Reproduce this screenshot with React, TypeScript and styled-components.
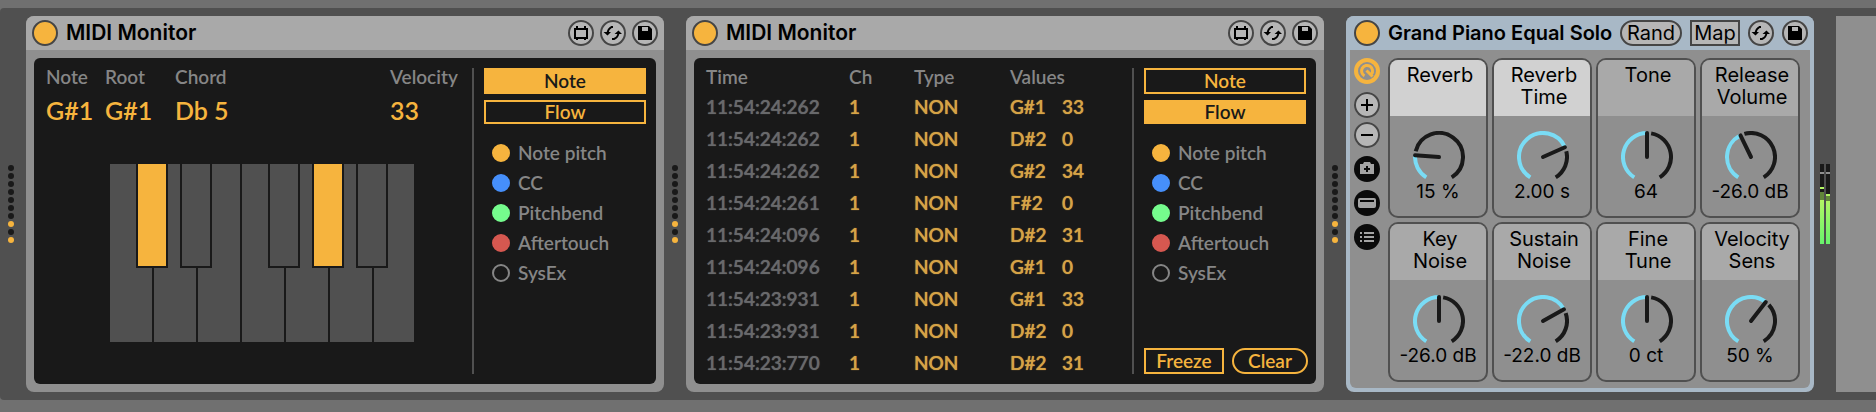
import React, { useState } from "react";
import styled, { createGlobalStyle } from "styled-components";

const c = {
  page: "#707070",
  rack: "#505050",
  header: "#a9a9a9",
  body: "#8f8f8f",
  screen: "#191919",
  amber: "#f6b43e",
  amberDim: "#d6a346",
  label: "#868686",
  time: "#68696b",
  line: "#505050",
  selected: "#a8b8c6",
  control: "#b6b6b6",
  lit: "#d1d1d1",
  blue: "#7adcf5",
};

const screenFont = `Lato, "Liberation Sans", sans-serif`;
const uiFont = `Inter, "Liberation Sans", sans-serif`;

const GlobalStyle = createGlobalStyle`
  *, *::before, *::after { box-sizing: border-box; }
  body { margin: 0; background: ${c.page}; font-family: ${uiFont}; overflow-x: auto; }
  button { margin: 0; padding: 0; font: inherit; color: inherit; cursor: pointer; }
`;

const Page = styled.main`
  padding: 8px 0 12px;
  min-width: 1400px;
`;

const Rack = styled.div`
  display: flex;
  padding: 8px 0;
  background: ${c.rack};
  border-radius: 4px 0 0 4px;
`;

const Rail = styled.div`
  flex: none;
  width: 22px;
  display: flex;
  align-items: center;
  justify-content: center;
  &:first-child { width: 26px; padding-right: 4px; }
`;

const Dots = styled.div`
  display: flex;
  flex-direction: column;
  gap: 2px;
`;

const Dot = styled.span<{ $on: boolean }>`
  width: 6px;
  height: 6px;
  border-radius: 50%;
  background: ${(p) => (p.$on ? c.amber : c.screen)};
`;

const DropZone = styled.div`
  flex: 40 1 0;
  background: ${c.body};
`;

const Device = styled.section<{ $grow: number; $selected?: boolean }>`
  flex: ${(p) => p.$grow} 1 0;
  min-width: ${(p) => (p.$selected ? "468px" : "0")};
  display: flex;
  flex-direction: column;
  border-radius: 8px;
  overflow: hidden;
  background: ${(p) => (p.$selected ? c.selected : c.body)};
`;

const Header = styled.header<{ $selected?: boolean }>`
  display: flex;
  align-items: center;
  gap: ${(p) => (p.$selected ? 8 : 6)}px;
  height: 34px;
  padding: 0 6px 0 ${(p) => (p.$selected ? 8 : 6)}px;
  background: ${(p) => (p.$selected ? c.selected : c.header)};
`;

const Title = styled.h2<{ $size: number; $inset: number }>`
  flex: 1;
  min-width: 0;
  margin: 0;
  padding-left: ${(p) => p.$inset}px;
  font-size: ${(p) => p.$size}px;
  font-weight: 600;
  line-height: 26px;
  color: #000;
  white-space: nowrap;
`;

const Power = styled.button`
  flex: none;
  width: 26px;
  height: 26px;
  border: 2px solid #454545;
  border-radius: 50%;
  background: ${c.amber};
`;

const RoundButton = styled.button<{ $tone?: "dark" | "bare" }>`
  flex: none;
  display: block;
  width: 26px;
  height: 26px;
  border: 0;
  border-radius: 50%;
  background: ${(p) => (p.$tone === "dark" ? "#0a0a0a" : p.$tone === "bare" ? "none" : c.control)};
  box-shadow: ${(p) => (p.$tone ? "none" : "inset 0 0 0 2px #454545")};
  svg { display: block; }
`;

const TextButton = styled.button<{ $pill?: boolean }>`
  flex: none;
  width: ${(p) => (p.$pill ? 62 : 50)}px;
  height: 26px;
  border: 2px solid #454545;
  border-radius: ${(p) => (p.$pill ? 13 : 0)}px;
  background: ${c.control};
  font-size: 20px;
  line-height: 22px;
  color: #000;
`;

const Screen = styled.div`
  flex: 1;
  display: flex;
  min-height: 326px;
  margin: 8px;
  border-radius: 6px;
  background: ${c.screen};
  font-family: ${screenFont};
  font-size: 19px;
  font-weight: 600;
`;

const View = styled.div`
  flex: 1;
  min-width: 0;
  padding: 5px 0 0 12px;
`;

const Side = styled.aside`
  flex: none;
  display: flex;
  flex-direction: column;
  width: 184px;
  margin: 10px 0;
  padding: 0 10px;
  border-left: 2px solid ${c.line};
`;

const ModeButton = styled.button<{ $active: boolean; $h: number }>`
  width: 162px;
  height: ${(p) => p.$h}px;
  margin-bottom: 6px;
  border: 2px solid ${c.amber};
  background: ${(p) => (p.$active ? c.amber : "transparent")};
  color: ${(p) => (p.$active ? c.screen : c.amber)};
  line-height: 20px;
`;

const Legend = styled.ul`
  list-style: none;
  margin: 8px 0 0;
  padding: 0 0 0 8px;
`;

const LegendItem = styled.label`
  display: flex;
  align-items: center;
  gap: 8px;
  height: 30px;
  color: ${c.label};
  line-height: 30px;
`;

const LegendCheck = styled.input<{ $color?: string }>`
  appearance: none;
  width: 18px;
  height: 18px;
  margin: 0;
  border: 2px solid ${(p) => p.$color ?? c.label};
  border-radius: 50%;
  &:checked { background: ${(p) => p.$color ?? c.label}; }
`;

const Actions = styled.div`
  display: flex;
  gap: 8px;
  margin-top: auto;
`;

const ActionButton = styled.button<{ $pill?: boolean }>`
  flex: none;
  width: ${(p) => (p.$pill ? 76 : 80)}px;
  height: 26px;
  border: 2px solid ${c.amber};
  border-radius: ${(p) => (p.$pill ? 13 : 0)}px;
  background: transparent;
  color: ${c.amber};
  line-height: 20px;
`;

const Readouts = styled.dl`
  display: grid;
  grid-template-columns: 59px 70px 1fr 82px;
  margin: 0;
`;

const Readout = styled.div`
  white-space: nowrap;
  dt { line-height: 28px; color: ${c.label}; }
  dd { margin: 0; font-size: 25px; line-height: 38px; color: ${c.amber}; }
`;

const KeyboardArea = styled.div`
  display: flex;
  justify-content: center;
  padding: 35px 0 0 6px;
`;

const LogTable = styled.table`
  width: 100%;
  table-layout: fixed;
  border-collapse: collapse;
  text-align: left;
  th, td { padding: 0; white-space: nowrap; }
  th { height: 27px; font-weight: 600; color: ${c.label}; }
  td { height: 32px; color: ${c.amberDim}; text-shadow: 0 0 1px ${c.amberDim}; }
  td:first-child { color: ${c.time}; text-shadow: 0 0 1px ${c.time}; }
`;

const InstrumentBody = styled.div`
  flex: 1;
  display: flex;
  gap: 8px;
  margin: 0 4px 4px;
  padding: 8px 10px 6px 4px;
  border-radius: 0 0 6px 6px;
  background: ${c.body};
`;

const Tools = styled.div`
  display: flex;
  flex-direction: column;
  gap: 8px;
`;

const AddRemove = styled.div`
  display: flex;
  flex-direction: column;
  gap: 4px;
`;

const MacroGrid = styled.div`
  flex: 1;
  display: grid;
  grid-template-columns: repeat(4, minmax(0, 1fr));
  grid-auto-rows: 1fr;
  gap: 4px;
`;

const Macro = styled.label`
  display: flex;
  flex-direction: column;
  align-items: center;
  height: 160px;
  border: 2px solid ${c.line};
  border-radius: 10px;
  overflow: hidden;
  color: #000;
`;

const MacroName = styled.span<{ $lit?: boolean }>`
  width: 100%;
  height: 56px;
  padding: 4px 0 0 4px;
  background: ${(p) => (p.$lit ? c.lit : c.header)};
  font-size: 20px;
  line-height: 22px;
  text-align: center;
  white-space: pre-line;
`;

const Dial = styled.span`
  position: relative;
  display: block;
  width: 52px;
  height: 50px;
  margin: 15px 0 0 2px;
  svg { display: block; }
  input {
    position: absolute;
    inset: 0;
    width: 100%;
    height: 100%;
    margin: 0;
    opacity: 0;
    cursor: pointer;
  }
`;

const MacroValue = styled.span`
  font-size: 19px;
  line-height: 22px;
  white-space: nowrap;
`;

const ResizeIcon = () => (
  <svg width="26" height="26" viewBox="0 0 26 26" fill="none" stroke="#000" strokeWidth="2">
    <path d="M7 9H19V18H7ZM9 6V8M17 6V8M9 19V20M17 19V20" />
  </svg>
);

const SwapIcon = () => (
  <svg width="26" height="26" viewBox="0 0 26 26">
    <g fill="none" stroke="#000" strokeWidth="2">
      <path d="M13 7H11.5Q8 9 7.5 13" />
      <path d="M12 19H14Q18 17.500 18.500 13" />
    </g>
    <path d="M3.500 12H11L7.500 15.500ZM14.500 14H22L18.500 10.500Z" fill="#000" />
  </svg>
);

const SaveIcon = () => (
  <svg width="26" height="26" viewBox="0 0 26 26">
    <path d="M6 6H17L20 9V20H6Z" fill="#000" />
    <path d="M10 7H16V11H10Z" fill={c.control} />
  </svg>
);

const MacroKnobIcon = () => (
  <svg width="26" height="26" viewBox="0 0 26 26" fill="none">
    <circle cx="13" cy="13" r="11" stroke={c.amber} strokeWidth="4" />
    <path d="M10.500 17.800A5.500 5.500 0 1 1 17.500 16.200" stroke={c.amber} strokeWidth="3" />
    <path d="M12.500 12.500L18.500 18.500" stroke={c.amber} strokeWidth="3" />
  </svg>
);

const PlusIcon = () => (
  <svg width="26" height="26" viewBox="0 0 26 26" stroke="#000" strokeWidth="2">
    <path d="M7 13H19M13 7V19" />
  </svg>
);

const MinusIcon = () => (
  <svg width="26" height="26" viewBox="0 0 26 26" stroke="#000" strokeWidth="2">
    <path d="M7 13H19" />
  </svg>
);

const CameraIcon = () => (
  <svg width="26" height="26" viewBox="0 0 26 26">
    <path d="M6 8H9L10 6H16L17 8H20V18H6Z" fill="#a3a3a3" />
    <path d="M10 13H16M13 10V16" stroke="#0a0a0a" strokeWidth="2" />
  </svg>
);

const PanelIcon = () => (
  <svg width="26" height="26" viewBox="0 0 26 26">
    <rect x="4" y="8" width="18" height="10" rx="2" fill="#a3a3a3" />
    <path d="M6 11H20" stroke="#0a0a0a" strokeWidth="2" />
  </svg>
);

const ListIcon = () => (
  <svg width="26" height="26" viewBox="0 0 26 26" stroke="#a3a3a3" strokeWidth="2">
    <path d="M6 9H8M10 9H20M6 13H8M10 13H20M6 17H8M10 17H20" />
  </svg>
);

const MidiDots = () => (
  <Rail>
    <Dots>
      {Array.from({ length: 10 }, (_, i) => (
        <Dot key={i} $on={i === 7 || i === 9} />
      ))}
    </Dots>
  </Rail>
);

const LevelMeter = () => (
  <Rail>
    <svg width="10" height="80" viewBox="0 0 10 80" shapeRendering="crispEdges" role="img" aria-label="Output level">
      <defs>
        <linearGradient id="level" x1="0" y1="36" x2="0" y2="80" gradientUnits="userSpaceOnUse">
          <stop offset="0" stopColor="#b2f564" />
          <stop offset="1" stopColor="#68f26c" />
        </linearGradient>
      </defs>
      <path d="M0 0H4V80H0ZM6 0H10V80H6Z" fill={c.screen} />
      <path d="M0 8H4V10H0ZM6 8H10V10H6Z" fill="#8f8f8f" />
      <path d="M0 28H4V36H0ZM6 32H10V37H6Z" fill="#61853a" />
      <path d="M0 23H4V25H0ZM6 30H10V32H6Z" fill="#b2f564" />
      <path d="M0 36H4V80H0ZM6 37H10V80H6Z" fill="url(#level)" />
    </svg>
  </Rail>
);

const sources: [string, string | undefined][] = [
  ["Note pitch", c.amber],
  ["CC", "#468ffa"],
  ["Pitchbend", "#75fc8d"],
  ["Aftertouch", "#d65850"],
  ["SysEx", undefined],
];

const SourceLegend = () => (
  <Legend>
    {sources.map(([name, color]) => (
      <li key={name}>
        <LegendItem>
          <LegendCheck type="checkbox" $color={color} defaultChecked={color !== undefined} />
          {name}
        </LegendItem>
      </li>
    ))}
  </Legend>
);

const readouts = [
  ["Note", "G#1"],
  ["Root", "G#1"],
  ["Chord", "Db 5"],
  ["Velocity", "33"],
];

const blackKeys = [
  { x: 26, on: true },
  { x: 70, on: false },
  { x: 158, on: false },
  { x: 202, on: true },
  { x: 246, on: false },
];

const NoteView = () => (
  <View>
    <Readouts>
      {readouts.map(([name, value]) => (
        <Readout key={name}>
          <dt>{name}</dt>
          <dd>{value}</dd>
        </Readout>
      ))}
    </Readouts>
    <KeyboardArea>
      <svg width="304" height="178" viewBox="0 0 304 178" shapeRendering="crispEdges" role="img" aria-label="Keyboard">
        {Array.from({ length: 7 }, (_, i) => (
          <rect key={i} x={i * 44} y="0" width={i === 6 ? 40 : 42} height="178" fill={c.rack} />
        ))}
        {blackKeys.map((k) => (
          <g key={k.x}>
            <rect x={k.x} y="0" width="32" height="104" fill={c.screen} />
            <rect x={k.x + 2} y="0" width="28" height="102" fill={k.on ? c.amber : c.rack} />
          </g>
        ))}
      </svg>
    </KeyboardArea>
  </View>
);

const events = [
  ["11:54:24:262", "1", "NON", "G#1", "33"],
  ["11:54:24:262", "1", "NON", "D#2", "0"],
  ["11:54:24:262", "1", "NON", "G#2", "34"],
  ["11:54:24:261", "1", "NON", "F#2", "0"],
  ["11:54:24:096", "1", "NON", "D#2", "31"],
  ["11:54:24:096", "1", "NON", "G#1", "0"],
  ["11:54:23:931", "1", "NON", "G#1", "33"],
  ["11:54:23:931", "1", "NON", "D#2", "0"],
  ["11:54:23:770", "1", "NON", "D#2", "31"],
];

const FlowView = () => (
  <View>
    <LogTable>
      <colgroup>
        <col width="143" />
        <col width="65" />
        <col width="96" />
        <col width="52" />
        <col />
      </colgroup>
      <thead>
        <tr>
          <th scope="col">Time</th>
          <th scope="col">Ch</th>
          <th scope="col">Type</th>
          <th scope="col" colSpan={2}>Values</th>
        </tr>
      </thead>
      <tbody>
        {events.map((row, i) => (
          <tr key={i}>
            {row.map((cell, j) => (
              <td key={j}>{cell}</td>
            ))}
          </tr>
        ))}
      </tbody>
    </LogTable>
  </View>
);

const MidiMonitor = ({ initial }: { initial: "note" | "flow" }) => {
  const [mode, setMode] = useState(initial);
  return (
    <Device $grow={638}>
      <Header>
        <Power aria-label="Device on" />
        <Title $size={21} $inset={2}>MIDI Monitor</Title>
        <RoundButton aria-label="Resize"><ResizeIcon /></RoundButton>
        <RoundButton aria-label="Hot-swap"><SwapIcon /></RoundButton>
        <RoundButton aria-label="Save preset"><SaveIcon /></RoundButton>
      </Header>
      <Screen>
        {mode === "note" ? <NoteView /> : <FlowView />}
        <Side>
          <ModeButton $h={26} $active={mode === "note"} onClick={() => setMode("note")}>Note</ModeButton>
          <ModeButton $h={24} $active={mode === "flow"} onClick={() => setMode("flow")}>Flow</ModeButton>
          <SourceLegend />
          {mode === "flow" && (
            <Actions>
              <ActionButton>Freeze</ActionButton>
              <ActionButton $pill>Clear</ActionButton>
            </Actions>
          )}
        </Side>
      </Screen>
    </Device>
  );
};

type MacroSpec = { name: string; value: string; angle: number; lit?: boolean };

const macros: MacroSpec[] = [
  { name: "Reverb", value: "15 %", angle: -86, lit: true },
  { name: "Reverb\nTime", value: "2.00 s", angle: 66, lit: true },
  { name: "Tone", value: "64", angle: 0 },
  { name: "Release\nVolume", value: "-26.0 dB", angle: -26 },
  { name: "Key\nNoise", value: "-26.0 dB", angle: 0 },
  { name: "Sustain\nNoise", value: "-22.0 dB", angle: 61 },
  { name: "Fine\nTune", value: "0 ct", angle: 0 },
  { name: "Velocity\nSens", value: "50 %", angle: 38 },
];

const point = (deg: number, r: number) => {
  const a = (deg * Math.PI) / 180;
  return `${26 + r * Math.sin(a)} ${26 - r * Math.cos(a)}`;
};

const arc = (from: number, to: number) =>
  `M${point(from, 24)}A24 24 0 ${to - from > 180 ? 1 : 0} 1 ${point(to, 24)}`;

const MacroControl = ({ name, value, angle, lit }: MacroSpec) => {
  const [turn, setTurn] = useState(angle);
  return (
    <Macro>
      <MacroName $lit={lit}>{name}</MacroName>
      <Dial>
        <svg width="52" height="52" viewBox="0 0 52 52" fill="none" strokeWidth="4">
          {turn < 140 && <path d={arc(turn + 10, 148)} stroke={c.screen} />}
          <path d={arc(-148, turn)} stroke={c.blue} />
          <path d={`M26 26L${point(turn, 24)}`} stroke={c.screen} strokeLinecap="round" />
        </svg>
        <input type="range" min={-147} max={148} value={turn} onChange={(e) => setTurn(Number(e.target.value))} />
      </Dial>
      <MacroValue>{value}</MacroValue>
    </Macro>
  );
};

const Instrument = () => (
  <Device $grow={468} $selected>
    <Header $selected>
      <Power aria-label="Device on" />
      <Title $size={20} $inset={0}>Grand Piano Equal Solo</Title>
      <TextButton $pill>Rand</TextButton>
      <TextButton>Map</TextButton>
      <RoundButton aria-label="Hot-swap"><SwapIcon /></RoundButton>
      <RoundButton aria-label="Save preset"><SaveIcon /></RoundButton>
    </Header>
    <InstrumentBody>
      <Tools>
        <RoundButton $tone="bare" aria-label="Show macros"><MacroKnobIcon /></RoundButton>
        <AddRemove>
          <RoundButton aria-label="Add macro"><PlusIcon /></RoundButton>
          <RoundButton aria-label="Remove macro"><MinusIcon /></RoundButton>
        </AddRemove>
        <RoundButton $tone="dark" aria-label="Variations"><CameraIcon /></RoundButton>
        <RoundButton $tone="dark" aria-label="Show devices"><PanelIcon /></RoundButton>
        <RoundButton $tone="dark" aria-label="Show chain list"><ListIcon /></RoundButton>
      </Tools>
      <MacroGrid>
        {macros.map((m) => (
          <MacroControl key={m.name} {...m} />
        ))}
      </MacroGrid>
    </InstrumentBody>
  </Device>
);

export default function App() {
  return (
    <>
      <GlobalStyle />
      <Page>
        <Rack>
          <MidiDots />
          <MidiMonitor initial="note" />
          <MidiDots />
          <MidiMonitor initial="flow" />
          <MidiDots />
          <Instrument />
          <LevelMeter />
          <DropZone />
        </Rack>
      </Page>
    </>
  );
}
